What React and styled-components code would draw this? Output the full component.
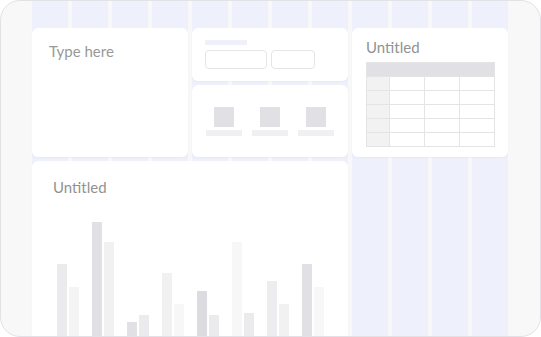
import React from "react";
import styled, { createGlobalStyle } from "styled-components";

const Global = createGlobalStyle`
  html, body { margin: 0; padding: 0; background: #ffffff; }
  * { box-sizing: border-box; }
`;

const Frame = styled.div`
  width: 541px;
  height: 337px;
  border: 1px solid #e2e2e6;
  border-radius: 20px;
  background: #f8f8f8;
  overflow: hidden;
  padding: 0 32px 0 31px;
`;

const Canvas = styled.div`
  width: 476px;
  height: 100%;
  padding-top: 27px;
  background: repeating-linear-gradient(
    90deg,
    #eef0fb 0px,
    #eef0fb 36px,
    #f8f8f9 36px,
    #f8f8f9 40px
  );
`;

const Grid = styled.div`
  display: grid;
  grid-template-columns: repeat(12, 36px);
  grid-template-rows: 53px 72px auto;
  gap: 4px;
`;

const Card = styled.div`
  background: #ffffff;
  border-radius: 6px;
  box-shadow: 0 1px 2px rgba(40, 40, 80, 0.04);
  grid-column: ${(p) => p.$col};
  grid-row: ${(p) => p.$row};
`;

const Title = styled.div`
  font-family: Lato, "Liberation Sans", sans-serif;
  font-size: 15px;
  line-height: 18px;
  color: ${(p) => p.$color || "#929292"};
`;

const NoteCard = styled(Card)`
  padding: 14px 17px;
`;

const FormCard = styled(Card)`
  padding: 12px 13px;
  display: flex;
  flex-direction: column;
  gap: 5px;
`;

const LabelBar = styled.div`
  width: 42px;
  height: 7px;
  background: #eff0f9;
`;

const InputRow = styled.div`
  display: flex;
  gap: 4px;
`;

const InputBox = styled.div`
  width: ${(p) => p.$w}px;
  height: 19px;
  border: 1px solid #e5e5e8;
  border-radius: 4px;
`;

const IconsCard = styled(Card)`
  display: flex;
  justify-content: center;
  align-items: center;
  gap: 10px;
`;

const IconItem = styled.div`
  width: 36px;
  display: flex;
  flex-direction: column;
  align-items: center;
  gap: 3px;
`;

const IconSquare = styled.div`
  width: 20px;
  height: 20px;
  background: #e1e1e5;
`;

const IconLabel = styled.div`
  width: 36px;
  height: 6px;
  background: #f0f0f2;
`;

const TableCard = styled(Card)`
  padding: 10px 13px 0 14px;
  display: flex;
  flex-direction: column;
  gap: 6px;
`;

const Table = styled.div`
  display: grid;
  grid-template-columns: 22px 1fr 1fr 1fr;
  border: 1px solid #e4e4e6;
`;

const HeadRow = styled.div`
  grid-column: 1 / -1;
  height: 13px;
  background: #e1e1e5;
`;

const Cell = styled.div`
  height: 14px;
  border-top: 1px solid #e4e4e6;
  border-left: ${(p) => (p.$first ? "none" : "1px solid #e4e4e6")};
  background: ${(p) => (p.$first ? "#f2f2f3" : "#ffffff")};
`;

const ChartCard = styled(Card)`
  height: 179px;
  padding: 17px 20px 0 25px;
  display: flex;
  flex-direction: column;
`;

const ChartTitle = styled(Title)`
  margin-left: -4px;
`;

const Bars = styled.div`
  flex: 1;
  display: flex;
  align-items: flex-end;
  gap: 13px;
`;

const Pair = styled.div`
  display: flex;
  align-items: flex-end;
  gap: 2px;
`;

const Bar = styled.div`
  width: 10px;
  height: ${(p) => p.$h}px;
  background: ${(p) => p.$c};
`;

const bars = [
  [[76, "#ebebed"], [53, "#f4f4f5"]],
  [[118, "#e1e1e5"], [98, "#f1f1f2"]],
  [[18, "#e1e1e5"], [25, "#ebebed"]],
  [[67, "#f1f1f2"], [36, "#f7f7f7"]],
  [[49, "#dcdce0"], [25, "#ebebed"]],
  [[98, "#f7f7f7"], [27, "#ebebed"]],
  [[59, "#ededef"], [36, "#f1f1f2"]],
  [[76, "#e1e1e5"], [53, "#f7f7f7"]],
];

export default function App() {
  return (
    <>
      <Global />
      <Frame>
        <Canvas>
          <Grid>
            <NoteCard $col="1 / 5" $row="1 / 3">
              <Title $color="#999999">Type here</Title>
            </NoteCard>
            <FormCard $col="5 / 9" $row="1">
              <LabelBar />
              <InputRow>
                <InputBox $w={62} />
                <InputBox $w={44} />
              </InputRow>
            </FormCard>
            <IconsCard $col="5 / 9" $row="2">
              {[0, 1, 2].map((i) => (
                <IconItem key={i}>
                  <IconSquare />
                  <IconLabel />
                </IconItem>
              ))}
            </IconsCard>
            <TableCard $col="9 / 13" $row="1 / 3">
              <Title>Untitled</Title>
              <Table>
                <HeadRow />
                {Array.from({ length: 5 }).map((_, r) =>
                  [0, 1, 2, 3].map((c) => <Cell key={`${r}-${c}`} $first={c === 0} />)
                )}
              </Table>
            </TableCard>
            <ChartCard $col="1 / 9" $row="3">
              <ChartTitle>Untitled</ChartTitle>
              <Bars>
                {bars.map((pair, i) => (
                  <Pair key={i}>
                    {pair.map(([h, c], j) => (
                      <Bar key={j} $h={h} $c={c} />
                    ))}
                  </Pair>
                ))}
              </Bars>
            </ChartCard>
          </Grid>
        </Canvas>
      </Frame>
    </>
  );
}
